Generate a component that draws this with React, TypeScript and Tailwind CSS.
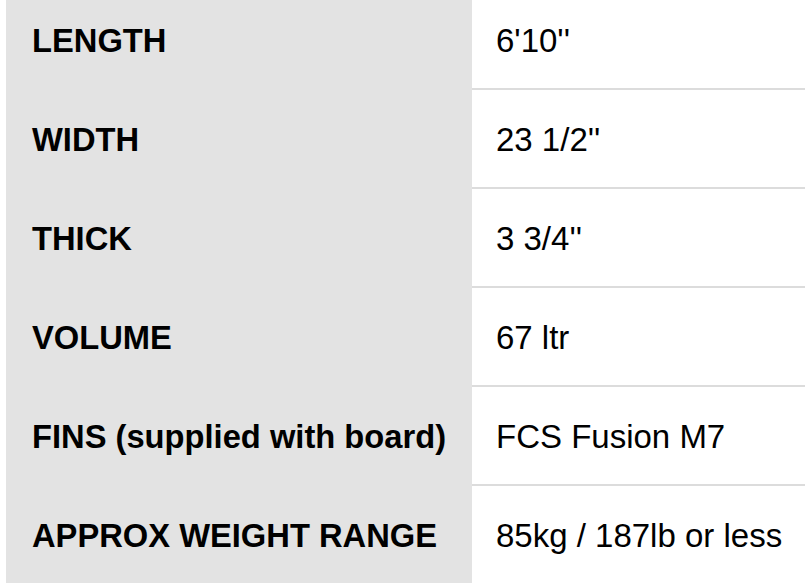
import React from "react";

const rows: [string, string][] = [
  ["LENGTH", "6'10''"],
  ["WIDTH", "23 1/2''"],
  ["THICK", "3 3/4''"],
  ["VOLUME", "67 ltr"],
  ["FINS (supplied with board)", "FCS Fusion M7"],
  ["APPROX WEIGHT RANGE", "85kg / 187lb or less"],
];

export default function App() {
  return (
    <div
      className="w-[805px] h-[587px] overflow-hidden bg-white text-black"
      style={{ fontFamily: '"Liberation Sans", Arial, Helvetica, sans-serif' }}
    >
      <div className="-mt-[9px] ml-[6px] grid grid-cols-[466px_1fr]">
        {rows.map(([k, v], i) => {
          const last = i === rows.length - 1;
          return (
            <React.Fragment key={k}>
              <div
                className={`bg-[#e3e3e3] flex items-center pl-[26px] pt-[2px] text-[32.7px] font-bold ${
                  last ? "h-[97px]" : "h-[99px] pb-[2px]"
                }`}
              >
                {k}
              </div>
              <div
                className={`flex items-center pl-[24px] pt-[2px] text-[33px] ${
                  last ? "h-[97px]" : "h-[99px] border-b-2 border-[#dcdcdc]"
                }`}
              >
                {v}
              </div>
            </React.Fragment>
          );
        })}
      </div>
    </div>
  );
}
